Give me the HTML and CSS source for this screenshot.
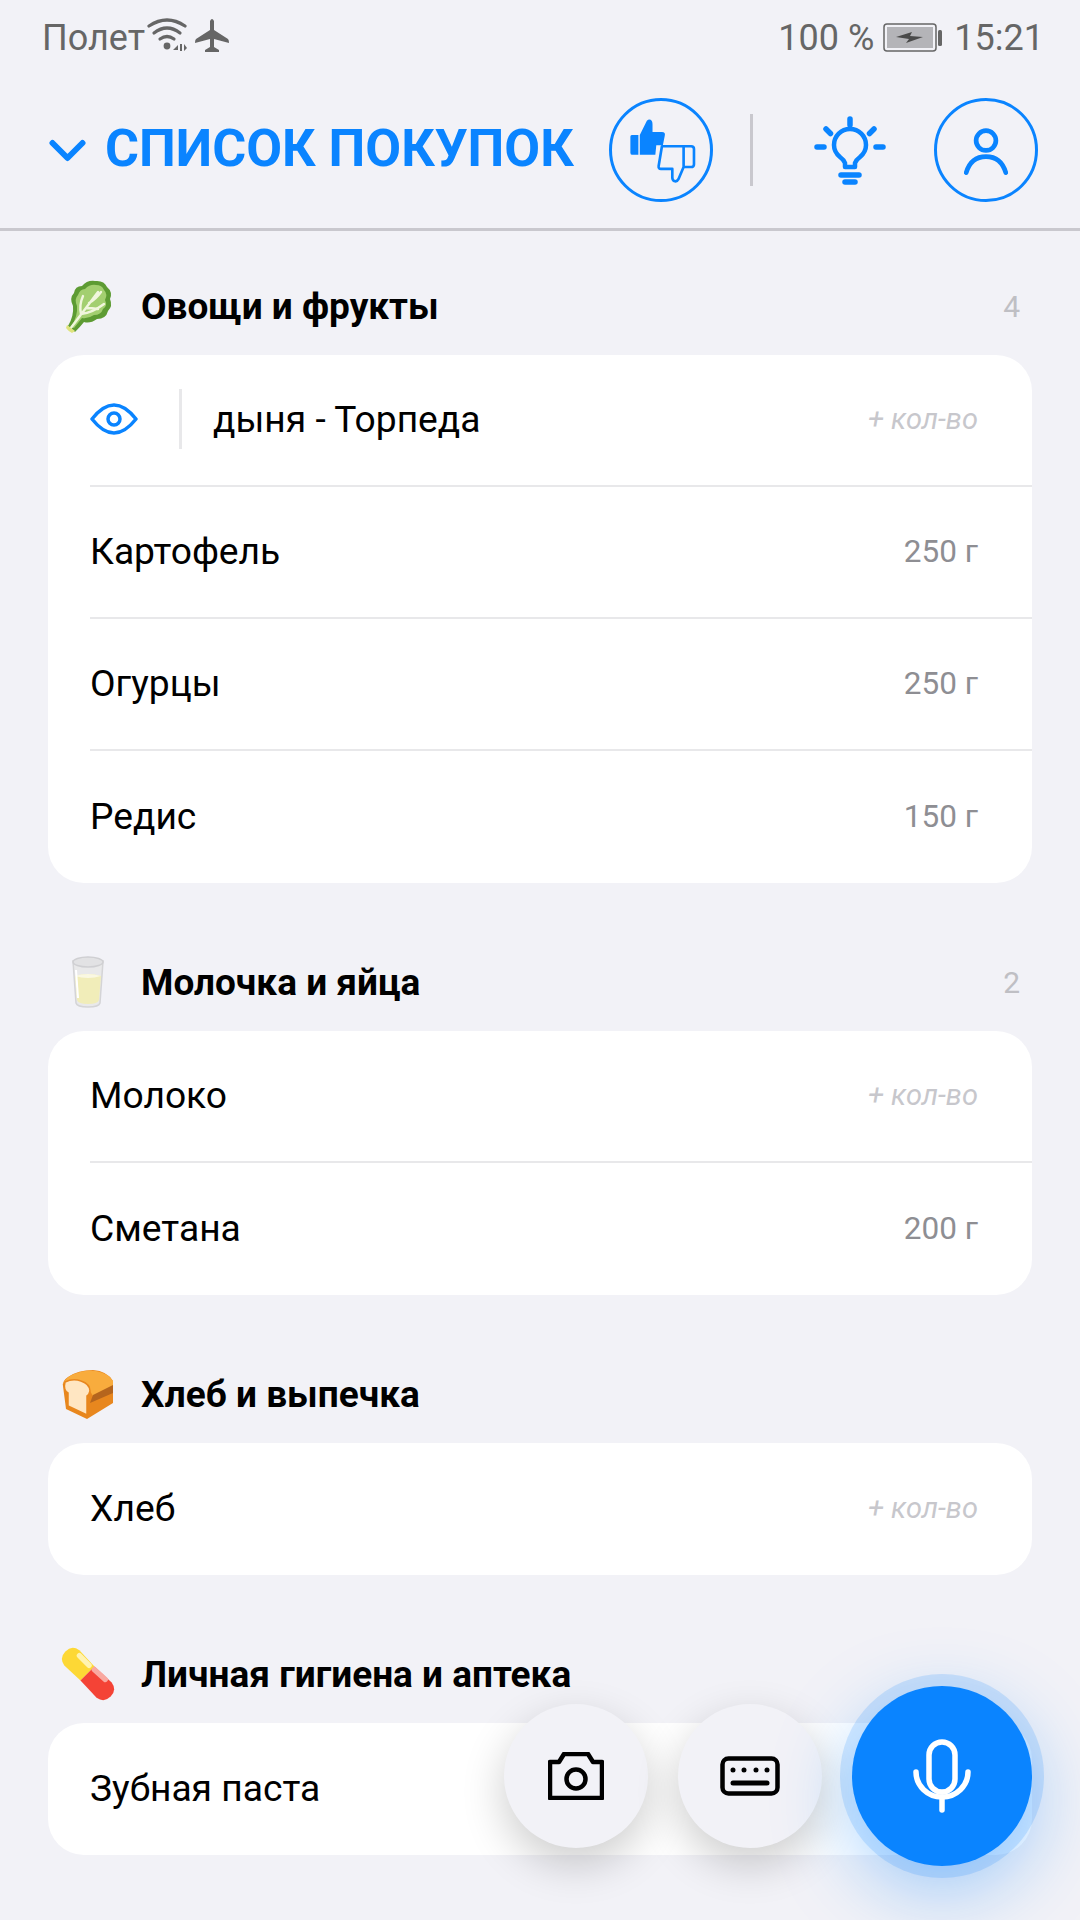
FILE: index.html
```html
<!DOCTYPE html>
<html lang="ru">
<head>
<meta charset="utf-8">
<title>Список покупок</title>
<link rel="stylesheet" href="styles.css">
</head>
<body>
<div class="status">
  <div class="status-left">
    <span>Полет</span>
    <svg class="ic-wifi" width="40" height="36" viewBox="0 0 40 36" fill="none" stroke="#666" stroke-linecap="round">
      <path d="M2 9Q20 -3 38 9" stroke-width="3.200"/>
      <path d="M7 16Q20 6 33 16" stroke-width="3.200"/>
      <path d="M13 22Q20 17 27 22" stroke-width="3.200"/>
      <circle cx="20" cy="29" r="3.400" fill="#666" stroke="none"/>
      <path d="M26 33l5-5v5zM33 27h2v7h-2zM37 27l3 4-3 3z" fill="#666" stroke="none"/>
    </svg>
    <svg class="ic-plane" width="36" height="36" viewBox="0 0 36 36" fill="#666">
      <path d="M16 3Q18 -1 20 3V12L34 21Q35 22 35 25L20 21V29L25 32V34H11V32L16 29V21L1 25Q1 22 2 21L16 12Z"/>
    </svg>
  </div>
  <div class="status-right">
    <span>100 %</span>
    <svg class="ic-batt" width="60" height="30" viewBox="0 0 60 30">
      <rect x="1" y="1" width="52" height="27" rx="3" fill="none" stroke="#666" stroke-width="1.500"/>
      <rect x="4" y="4" width="46" height="21" fill="#b4b4b8"/>
      <rect x="55" y="7" width="4" height="16" rx="1.500" fill="#666"/>
      <path d="M13 14L29 9L27 13L40 14L23 20L26 16Z" fill="#4a4a4a"/>
    </svg>
    <span>15:21</span>
  </div>
</div>

<header class="top">
  <svg class="chev" width="37" height="23" viewBox="0 0 37 23" fill="none" stroke="#0a84ff" stroke-width="6" stroke-linecap="round" stroke-linejoin="round">
    <path d="M3.500 4L18.500 19L33.500 4"/>
  </svg>
  <h1 class="title">СПИСОК ПОКУПОК</h1>
  <div class="circle">
    <svg width="104" height="104" viewBox="0 0 104 104">
      <path d="M21 36H28V57H21Q19.500 57 19.500 55V38Q19.500 36 21 36Z" fill="#0a84ff"/>
      <path d="M29.500 36L37 21Q39 19 41 20Q43 21 43 25V33H53Q57 33 56 37L54 47H47L46 57H29.500Z" fill="#0a84ff"/>
      <path d="M53 48H76V70L70.500 83Q69 86 66 85Q64 84 64 81V72H52Q49 72 49.500 69ZM76 48H84Q87 48 87 51V67Q87 70 84 70H76" fill="#f2f2f7" stroke="#0a84ff" stroke-width="2.800" stroke-linejoin="round"/>
    </svg>
  </div>
  <div class="vsep"></div>
  <svg class="bulb" width="72" height="72" viewBox="0 0 72 72" fill="none" stroke="#0a84ff" stroke-linecap="round" stroke-linejoin="round">
    <path d="M36 5V11M12 15L16.500 19.500M60 15L55.500 19.500M3 33H10M62 33H69" stroke-width="5.500"/>
    <path d="M31 53V49Q30 46 26 43Q20 38 20 31A16 16 0 0 1 52 31Q52 38 46 43Q42 46 41 49V53Z" stroke-width="4.500"/>
    <path d="M27 61H45" stroke-width="5.500"/>
    <path d="M31 68H41" stroke-width="5.500"/>
  </svg>
  <div class="circle">
    <svg width="104" height="104" viewBox="0 0 104 104" fill="none" stroke="#0a84ff" stroke-width="5" stroke-linecap="round">
      <circle cx="52" cy="42" r="10.500"/>
      <path d="M31 76Q36 59 52 59Q68 59 73 76"/>
    </svg>
  </div>
</header>

<main class="lists">
  <section class="group">
    <div class="group-head">
      <svg class="emoji" width="56" height="56" viewBox="0 0 56 56">
        <path d="M8 48Q14 38 13 28Q9 20 14 15Q15 8 22 8Q27 2 35 3Q44 2 47 9Q53 14 50 21Q53 28 48 33Q46 41 37 41Q30 46 24 44Q20 49 15 54Z" fill="#5d9b33"/>
        <path d="M11 49Q18 38 17 28Q14 21 18 17Q20 11 25 11Q30 6 36 7Q42 7 44 12Q48 16 45 22Q48 28 43 31Q41 37 34 37Q28 41 22 40Q18 45 14 50Z" fill="#a3cf70"/>
        <path d="M10 51Q20 38 38 14M21 36Q19 27 23 18M21 36Q32 35 44 26M29 25Q36 21 41 14M26 30Q32 30 38 31" fill="none" stroke="#f1f6dd" stroke-width="2.400" stroke-linecap="round"/>
        <path d="M7 47L15 53L12 55Q8 53 6 50Z" fill="#dfe47c"/>
      </svg>
      <h2 class="group-name">Овощи и фрукты</h2>
      <span class="group-count">4</span>
    </div>
    <div class="card">
      <div class="row">
        <svg class="eye" width="48" height="32" viewBox="0 0 48 32" fill="none" stroke="#0a84ff" stroke-width="3.500">
          <path d="M2 16Q13 2 24 2Q35 2 46 16Q35 30 24 30Q13 30 2 16Z" stroke-linejoin="round"/>
          <circle cx="24" cy="16" r="6"/>
        </svg>
        <div class="row-sep"></div>
        <span class="row-name">дыня - Торпеда</span>
        <span class="row-qty is-empty">+ кол-во</span>
      </div>
      <div class="row"><span class="row-name">Картофель</span><span class="row-qty">250 г</span></div>
      <div class="row"><span class="row-name">Огурцы</span><span class="row-qty">250 г</span></div>
      <div class="row"><span class="row-name">Редис</span><span class="row-qty">150 г</span></div>
    </div>
  </section>

  <section class="group">
    <div class="group-head">
      <svg class="emoji" width="56" height="56" viewBox="0 0 56 56">
        <path d="M13 7H43L40 49Q39 53 28 53Q17 53 16 49Z" fill="#e9e9ea" stroke="#d4d4d6" stroke-width="1.500"/>
        <ellipse cx="28" cy="8" rx="15" ry="5" fill="#e2e2e4" stroke="#cfcfd2" stroke-width="1.500"/>
        <path d="M15 22Q28 18 41 22L39 46Q38 50 28 50Q18 50 17 46Z" fill="#f1edb9"/>
        <path d="M15 22Q28 18 41 22Q28 26 15 22Z" fill="#faf8e2"/>
        <path d="M16 16L18 44" stroke="#fff" stroke-width="2" fill="none"/>
      </svg>
      <h2 class="group-name">Молочка и яйца</h2>
      <span class="group-count">2</span>
    </div>
    <div class="card">
      <div class="row"><span class="row-name">Молоко</span><span class="row-qty is-empty">+ кол-во</span></div>
      <div class="row"><span class="row-name">Сметана</span><span class="row-qty">200 г</span></div>
    </div>
  </section>

  <section class="group">
    <div class="group-head">
      <svg class="emoji" width="56" height="56" viewBox="0 -1 56 56">
        <path d="M3 19Q2 14 8 10Q18 3 33 3Q47 4 53 14V36L27 52L6 42Z" fill="#e8871e"/>
        <path d="M3 17Q6 10 14 7Q25 2 36 4Q48 6 53 14L53 19L33 29L25 16Q13 10 3 17Z" fill="#f8ac3d"/>
        <path d="M53 18L33 28L30 36L53 26Z" fill="#b5651d"/>
        <path d="M5 15Q13 11 21 14Q30 17 30 24Q29 28 27 29V48L8 39V26Q3 23 5 15Z" fill="#ffe6c2" stroke="#e8871e" stroke-width="1.500"/>
      </svg>
      <h2 class="group-name">Хлеб и выпечка</h2>
    </div>
    <div class="card">
      <div class="row"><span class="row-name">Хлеб</span><span class="row-qty is-empty">+ кол-во</span></div>
    </div>
  </section>

  <section class="group">
    <div class="group-head">
      <svg class="emoji" width="56" height="56" viewBox="2 2 52 52">
        <path d="M7 7Q13 1 20 6L34 21L21 34L6 20Q1 13 7 7Z" fill="#fdd835"/>
        <path d="M34 21L50 36Q55 43 49 49Q43 55 36 50L21 34Z" fill="#f44336"/>
        <path d="M20 11L29 20" stroke="#fff3b0" stroke-width="5" stroke-linecap="round"/>
        <path d="M34 24L44 33" stroke="#f9a8a0" stroke-width="5" stroke-linecap="round"/>
      </svg>
      <h2 class="group-name">Личная гигиена и аптека</h2>
    </div>
    <div class="card">
      <div class="row"><span class="row-name">Зубная паста</span></div>
    </div>
  </section>
</main>

<div class="fabs">
  <button class="fab">
    <svg width="56" height="48" viewBox="0 0 56 48" fill="none" stroke="#000" stroke-width="4.500" stroke-linejoin="round">
      <path d="M2 10H11L16 2H40L45 10H54V46H2Z"/>
      <circle cx="28" cy="27" r="9.500"/>
    </svg>
  </button>
  <button class="fab">
    <svg width="60" height="40" viewBox="0 0 60 40" fill="none" stroke="#000">
      <rect x="2.500" y="2.500" width="55" height="35" rx="6" stroke-width="4.500"/>
      <path d="M13 27H47" stroke-width="5" stroke-linecap="round"/>
      <path d="M13 14V14.010M24 14V14.010M36 14V14.010M47 14V14.010" stroke-width="5" stroke-linecap="round"/>
    </svg>
  </button>
  <button class="fab fab-mic">
    <svg width="60" height="74" viewBox="0 0 60 74" fill="none" stroke="#fff" stroke-width="5.500" stroke-linecap="round">
      <rect x="17" y="3" width="26" height="50" rx="13"/>
      <path d="M4 33A26 25 0 0 0 56 33"/>
      <path d="M30 58V71"/>
    </svg>
  </button>
</div>
</body>
</html>
```

FILE: styles.css
```css
*{box-sizing:border-box;margin:0;padding:0;}
html,body{height:1920px;}
body{position:relative;overflow:hidden;background:#f2f2f7;color:#000;font-family:Roboto,'Noto Sans',sans-serif;}

.status{display:flex;justify-content:space-between;align-items:center;height:75px;padding:0 36px 0 42px;color:#666;font-size:36px;}
.status-left,.status-right{display:flex;align-items:center;}
.ic-wifi{margin:-6px 0 0 2px;}
.ic-plane{margin:-3px 0 0 7px;}
.ic-batt{margin:0 11px 0 9px;}

.top{display:flex;align-items:center;height:156px;padding:0 42px 3px 49px;border-bottom:3px solid #c9c8ce;}
.chev{flex:none;margin-right:19px;}
.title{flex:1;margin-top:-3px;color:#0a84ff;font-size:52px;font-weight:700;white-space:nowrap;}
.circle{flex:none;width:104px;height:104px;border:3px solid #0a84ff;border-radius:50%;display:flex;align-items:center;justify-content:center;}
.vsep{flex:none;width:3px;height:72px;margin:0 61px 0 37px;background:#c9c8ce;}
.bulb{flex:none;margin-right:48px;}

.lists{display:flex;flex-direction:column;gap:69px;padding:45px 48px 0;}
.group-head{display:flex;align-items:center;height:60px;margin-bottom:19px;padding:0 12px 0 12px;}
.emoji{flex:none;margin-right:25px;}
.group-name{flex:1;font-size:37px;font-weight:700;}
.group-count{color:#bfbfc4;font-size:30px;}

.card{background:#fff;border-radius:36px;overflow:hidden;}
.row{display:flex;align-items:center;height:132px;margin-left:42px;padding:0 54px 2px 0;border-bottom:2px solid #e8e8ea;}
.row:last-child{border-bottom:0;}
.row-name{flex:1;font-size:37.200px;}
.row-qty{color:#8e8e93;font-size:31.500px;}
.row-qty.is-empty{color:#c7c7cc;font-style:italic;font-size:29px;}
.eye{flex:none;margin-right:41px;}
.row-sep{flex:none;width:3px;height:60px;margin-right:31px;background:#e8e8ea;}

.fabs{position:absolute;right:48px;bottom:54px;display:flex;align-items:center;gap:30px;}
.fab{display:flex;align-items:center;justify-content:center;width:144px;height:144px;border:0;border-radius:50%;background:#f2f2f7;box-shadow:0 16px 44px rgba(0,0,0,.2);}
.fab-mic{width:180px;height:180px;background:#0a84ff;box-shadow:0 0 0 12px rgba(10,132,255,.16),0 24px 80px rgba(10,132,255,.38);}
```
